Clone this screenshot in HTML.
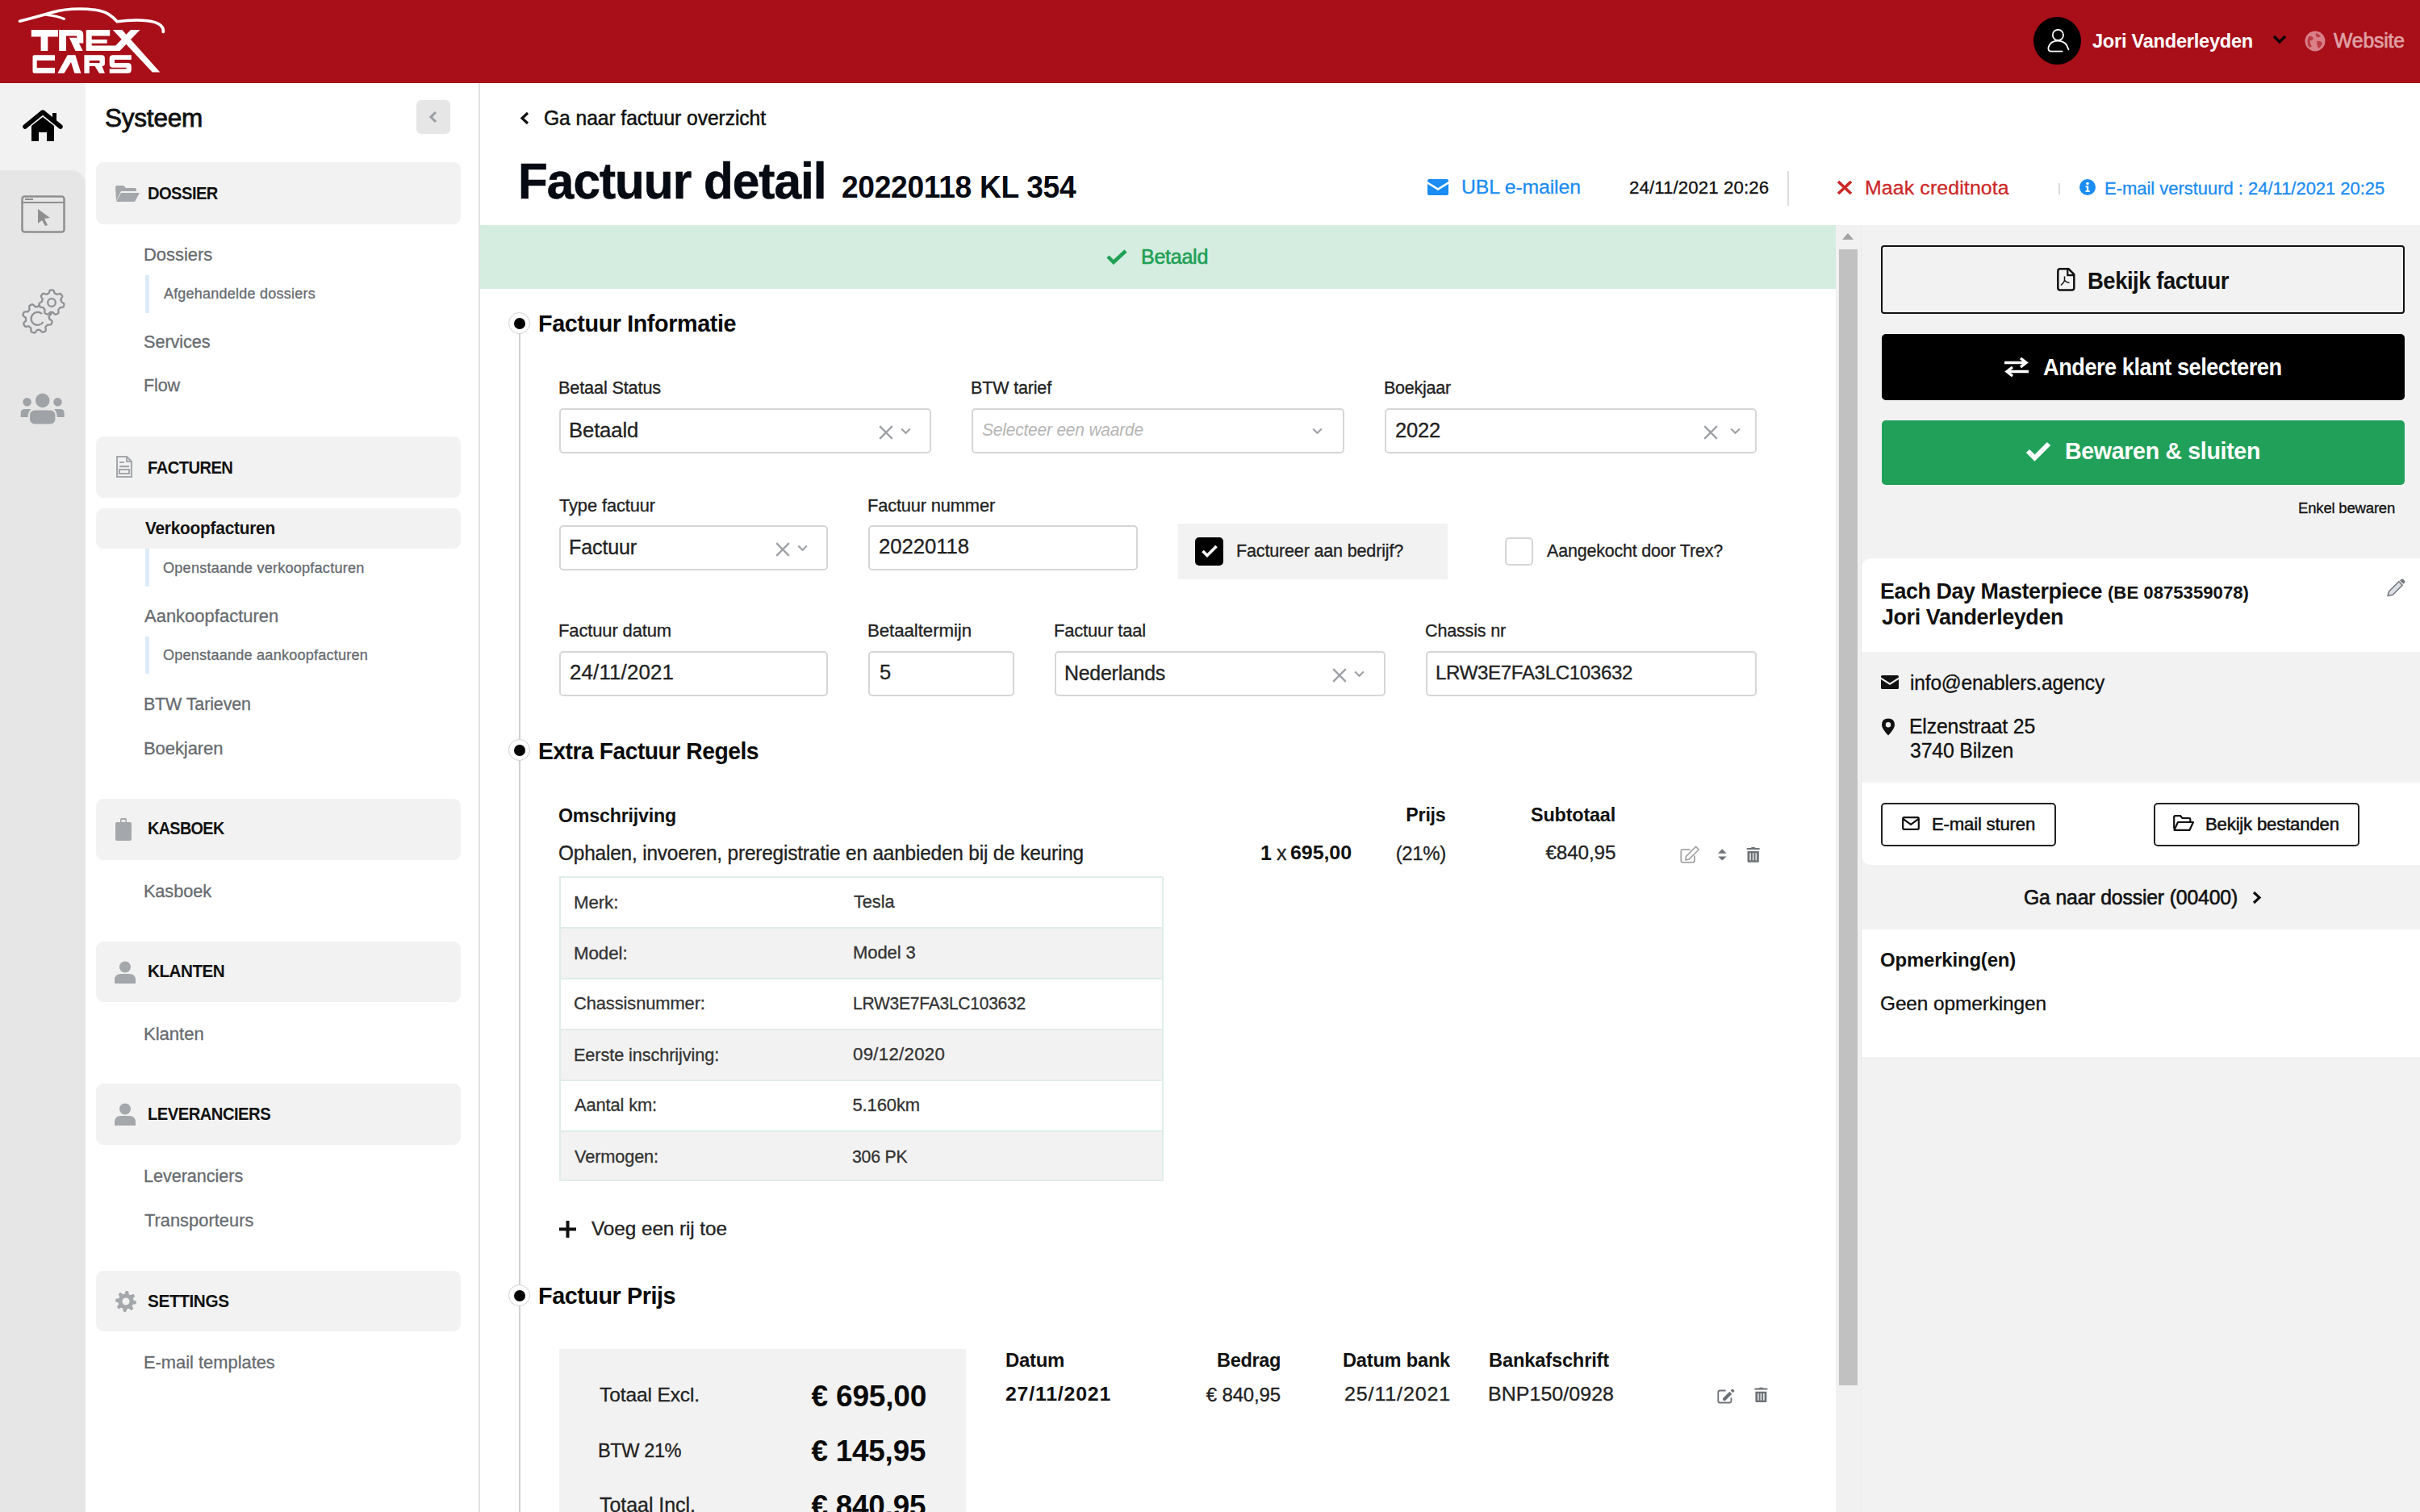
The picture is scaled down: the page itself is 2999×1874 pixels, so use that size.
<!DOCTYPE html>
<html><head><meta charset="utf-8"><title>Factuur detail</title>
<style>
html,body{margin:0;padding:0;}
body{width:2999px;height:1874px;position:relative;overflow:hidden;background:#fff;font-family:"Liberation Sans",sans-serif;}
.t{position:absolute;white-space:nowrap;line-height:1;}
</style></head><body>
<div style="position:absolute;left:0px;top:0px;width:2999px;height:103px;background:#a80f19;"></div>
<svg style="position:absolute;left:0px;top:0px;" width="230" height="103" viewBox="0 0 230 103"><g fill="#fff">
<path d="M38.8,36.9 H72 V45.6 H59.3 V63 H50.6 V45.6 H38.8 Z"/>
<path d="M73.2,36.9 H97 Q103.3,36.9 103.3,43 V53.5 H95.2 V44.6 H81.9 V63 H73.2 Z"/>
<path d="M85.9,46.8 H94.6 L102.7,63 H93.4 Z"/>
<path d="M106.7,36.9 H136.2 V44.5 H113.7 V49.1 H132.7 V53.7 H113.7 V56.6 H146 V63 H106.7 Z"/>
<path d="M139.7,36.9 H151.3 L198.3,89.4 H188.8 Z"/>
<path d="M162,36.9 H173.5 L148.5,63 H137 Z"/>
<path d="M42.5,68.2 H68 V75.1 H45.7 V84 H68 V90.7 H42.5 Q40.5,90.7 40.5,88.7 V70.2 Q40.5,68.2 42.5,68.2 Z"/>
<path d="M71.4,90.7 L83.6,68.2 H93.4 L100.4,90.7 H92.3 L88,77 L79.5,90.7 Z"/>
<path fill-rule="evenodd" d="M104.4,90.7 V68.2 H126 Q129.9,68.2 129.9,72 V79 Q129.9,82 126.5,82 L129.9,90.7 H123 L117.5,82 H110.8 V90.7 Z M110.8,75.1 V78 H123.5 V75.1 Z"/>
<path d="M140,68.2 H162.8 V74 H142 V78 H158.5 Q162.8,78 162.8,82.3 V86.5 Q162.8,90.7 158.5,90.7 H135.7 V85.5 H156.5 V83.8 H140 Q135.7,83.8 135.7,79.5 V72.5 Q135.7,68.2 140,68.2 Z"/>
</g>
<path d="M24.5,26.2 C40,22.5 52,19 64,15.5 C80,11 100,10.2 118,12.2 C131,13.8 138,19 145.2,26.8 C160,24.6 180,24 192,27.6 C200.5,30.5 203,34.5 202.3,39.5" fill="none" stroke="#fff" stroke-width="3.6" stroke-linecap="round"/>
<path d="M58,18.5 Q70,19.5 79.5,23.5" fill="none" stroke="#fff" stroke-width="3" stroke-linecap="round"/></svg>
<div style="position:absolute;left:2520px;top:21px;width:59px;height:59px;border-radius:50%;background:#000"></div>
<svg style="position:absolute;left:2536px;top:36px;" width="30" height="30" viewBox="0 0 30 30"><circle cx="14.4" cy="7.4" r="6.6" fill="none" stroke="#fff" stroke-width="1.8"/><path d="M19.7,27.6 H6 Q2,27.6 2.5,23 Q4.5,14.6 14.6,14.6 Q24.5,14.6 27.4,25.3" fill="none" stroke="#fff" stroke-width="1.8" stroke-linecap="round"/></svg>
<svg style="position:absolute;left:2815px;top:42px;" width="20" height="14" viewBox="0 0 20 14"><path d="M3,3 L10,10 L17,3" fill="none" stroke="#000" stroke-width="3.2"/></svg>
<svg style="position:absolute;left:2856px;top:38px;" width="26" height="26" viewBox="0 0 26 26"><circle cx="13" cy="13" r="12.5" fill="#d98088"/><path d="M5,7 Q9,6 11,9 Q10,13 7,12 Q6,16 9,19 Q7,22 5,20 Q2,15 5,7 Z M14,3 Q18,4 20,7 Q17,9 15,8 Q13,6 14,3 Z M15,13 Q19,12 22,15 Q21,20 17,22 Q15,18 15,13 Z" fill="#a80f19" opacity="0.6"/></svg>
<div style="position:absolute;left:0px;top:103px;width:106px;height:1771px;background:#f2f2f2;"></div>
<div style="position:absolute;left:0px;top:211px;width:106px;height:1663px;background:#e6e6e6;border-top-right-radius:18px;"></div>
<svg style="position:absolute;left:28px;top:136px;" width="50" height="40" viewBox="0 0 50 40"><path d="M3,21 L25,3 L47,21" fill="none" stroke="#000" stroke-width="5.5" stroke-linecap="round" stroke-linejoin="round"/><path d="M37,4 H42 V15 L37,11 Z" fill="#000"/><path d="M11,20 L25,9 L39,20 V39 H30 V28 H20 V39 H11 Z" fill="#000"/></svg>
<svg style="position:absolute;left:26px;top:242px;" width="56" height="48" viewBox="0 0 56 48"><rect x="1.5" y="1.5" width="52" height="44" rx="3" fill="none" stroke="#8f8f8f" stroke-width="2.5"/><line x1="2" y1="9" x2="53" y2="9" stroke="#8f8f8f" stroke-width="2"/><rect x="5" y="4" width="10" height="2" fill="#8f8f8f"/><path d="M21,17 L36,28 L29,29 L33,37 L30,38 L26,31 L21,35 Z" fill="#8f8f8f"/></svg>
<svg style="position:absolute;left:25px;top:358px;" width="56" height="56" viewBox="0 0 56 56"><g stroke="#8f9194" stroke-width="2.3" stroke-linejoin="round"><path d="M39.63,40.18 L39.50,40.77 L39.35,41.35 L39.18,41.93 L39.00,42.51 L38.79,43.08 L38.57,43.64 L38.32,44.20 L37.47,44.45 L36.46,44.57 L35.47,44.63 L34.49,44.64 L33.53,44.60 L33.26,44.99 L32.97,45.37 L32.67,45.74 L32.37,46.10 L32.05,46.45 L31.72,46.79 L31.37,47.12 L31.46,47.94 L31.61,48.91 L31.70,49.89 L31.74,50.90 L31.72,51.92 L31.21,52.25 L30.69,52.56 L30.16,52.85 L29.62,53.12 L29.07,53.38 L28.52,53.62 L27.95,53.84 L27.17,53.41 L26.38,52.79 L25.63,52.13 L24.93,51.45 L24.28,50.73 L23.81,50.81 L23.34,50.88 L22.87,50.94 L22.40,50.97 L21.92,50.99 L21.45,51.00 L20.97,50.99 L20.45,51.63 L19.87,52.42 L19.24,53.18 L18.56,53.92 L17.82,54.63 L17.23,54.50 L16.65,54.35 L16.07,54.18 L15.49,54.00 L14.92,53.79 L14.36,53.57 L13.80,53.32 L13.55,52.47 L13.43,51.46 L13.37,50.47 L13.36,49.49 L13.40,48.53 L13.01,48.26 L12.63,47.97 L12.26,47.67 L11.90,47.37 L11.55,47.05 L11.21,46.72 L10.88,46.37 L10.06,46.46 L9.09,46.61 L8.11,46.70 L7.10,46.74 L6.08,46.72 L5.75,46.21 L5.44,45.69 L5.15,45.16 L4.88,44.62 L4.62,44.07 L4.38,43.52 L4.16,42.95 L4.59,42.17 L5.21,41.38 L5.87,40.63 L6.55,39.93 L7.27,39.28 L7.19,38.81 L7.12,38.34 L7.06,37.87 L7.03,37.40 L7.01,36.92 L7.00,36.45 L7.01,35.97 L6.37,35.45 L5.58,34.87 L4.82,34.24 L4.08,33.56 L3.37,32.82 L3.50,32.23 L3.65,31.65 L3.82,31.07 L4.00,30.49 L4.21,29.92 L4.43,29.36 L4.68,28.80 L5.53,28.55 L6.54,28.43 L7.53,28.37 L8.51,28.36 L9.47,28.40 L9.74,28.01 L10.03,27.63 L10.33,27.26 L10.63,26.90 L10.95,26.55 L11.28,26.21 L11.63,25.88 L11.54,25.06 L11.39,24.09 L11.30,23.11 L11.26,22.10 L11.28,21.08 L11.79,20.75 L12.31,20.44 L12.84,20.15 L13.38,19.88 L13.93,19.62 L14.48,19.38 L15.05,19.16 L15.83,19.59 L16.62,20.21 L17.37,20.87 L18.07,21.55 L18.72,22.27 L19.19,22.19 L19.66,22.12 L20.13,22.06 L20.60,22.03 L21.08,22.01 L21.55,22.00 L22.03,22.01 L22.55,21.37 L23.13,20.58 L23.76,19.82 L24.44,19.08 L25.18,18.37 L25.77,18.50 L26.35,18.65 L26.93,18.82 L27.51,19.00 L28.08,19.21 L28.64,19.43 L29.20,19.68 L29.45,20.53 L29.57,21.54 L29.63,22.53 L29.64,23.51 L29.60,24.47 L29.99,24.74 L30.37,25.03 L30.74,25.33 L31.10,25.63 L31.45,25.95 L31.79,26.28 L32.12,26.63 L32.94,26.54 L33.91,26.39 L34.89,26.30 L35.90,26.26 L36.92,26.28 L37.25,26.79 L37.56,27.31 L37.85,27.84 L38.12,28.38 L38.38,28.93 L38.62,29.48 L38.84,30.05 L38.41,30.83 L37.79,31.62 L37.13,32.37 L36.45,33.07 L35.73,33.72 L35.81,34.19 L35.88,34.66 L35.94,35.13 L35.97,35.60 L35.99,36.08 L36.00,36.55 L35.99,37.03 L36.63,37.55 L37.42,38.13 L38.18,38.76 L38.92,39.44 Z" fill="none"/><path d="M27,31 A8,8 0 1 0 28.5,41" fill="none"/><path d="M54.42,18.55 L54.35,19.12 L54.26,19.70 L54.15,20.26 L54.02,20.83 L53.87,21.39 L53.69,21.94 L53.50,22.49 L52.74,22.80 L51.86,23.00 L50.97,23.14 L50.10,23.23 L49.24,23.26 L49.00,23.64 L48.74,24.01 L48.47,24.37 L48.19,24.72 L47.90,25.05 L47.59,25.38 L47.27,25.70 L47.32,26.44 L47.43,27.31 L47.48,28.20 L47.47,29.10 L47.41,30.02 L46.91,30.33 L46.41,30.61 L45.90,30.88 L45.37,31.13 L44.84,31.36 L44.30,31.57 L43.75,31.75 L43.04,31.36 L42.33,30.79 L41.66,30.19 L41.05,29.56 L40.49,28.91 L40.04,28.95 L39.59,28.99 L39.15,29.00 L38.70,29.00 L38.25,28.98 L37.80,28.94 L37.36,28.89 L36.81,29.39 L36.20,30.01 L35.53,30.61 L34.82,31.17 L34.06,31.69 L33.51,31.50 L32.98,31.28 L32.45,31.05 L31.93,30.79 L31.41,30.52 L30.91,30.22 L30.43,29.91 L30.29,29.11 L30.29,28.20 L30.35,27.31 L30.46,26.44 L30.62,25.59 L30.30,25.27 L30.00,24.94 L29.71,24.60 L29.43,24.24 L29.17,23.88 L28.92,23.51 L28.68,23.13 L27.95,23.02 L27.08,22.92 L26.20,22.77 L25.32,22.56 L24.43,22.30 L24.25,21.75 L24.08,21.19 L23.93,20.63 L23.81,20.07 L23.70,19.50 L23.62,18.92 L23.56,18.35 L24.10,17.74 L24.81,17.17 L25.55,16.66 L26.30,16.20 L27.06,15.80 L27.11,15.36 L27.18,14.91 L27.27,14.47 L27.37,14.04 L27.49,13.60 L27.63,13.18 L27.78,12.75 L27.41,12.11 L26.94,11.37 L26.51,10.59 L26.12,9.77 L25.78,8.91 L26.09,8.43 L26.42,7.95 L26.76,7.48 L27.13,7.03 L27.51,6.60 L27.91,6.17 L28.32,5.77 L29.13,5.81 L30.02,6.02 L30.88,6.27 L31.70,6.57 L32.49,6.92 L32.87,6.68 L33.26,6.46 L33.66,6.25 L34.07,6.06 L34.48,5.88 L34.90,5.72 L35.32,5.58 L35.60,4.89 L35.88,4.06 L36.22,3.24 L36.62,2.42 L37.08,1.62 L37.65,1.56 L38.23,1.52 L38.81,1.50 L39.39,1.50 L39.97,1.53 L40.55,1.58 L41.12,1.65 L41.59,2.31 L41.99,3.13 L42.32,3.96 L42.60,4.79 L42.82,5.63 L43.25,5.78 L43.66,5.94 L44.07,6.13 L44.48,6.32 L44.87,6.54 L45.26,6.76 L45.64,7.00 L46.35,6.79 L47.17,6.49 L48.03,6.25 L48.91,6.05 L49.83,5.91 L50.23,6.32 L50.62,6.75 L51.00,7.19 L51.36,7.64 L51.70,8.11 L52.02,8.59 L52.33,9.09 L52.10,9.87 L51.71,10.69 L51.27,11.47 L50.79,12.21 L50.28,12.90 L50.42,13.32 L50.55,13.75 L50.67,14.19 L50.76,14.63 L50.84,15.07 L50.91,15.51 L50.95,15.96 L51.57,16.38 L52.31,16.84 L53.04,17.35 L53.74,17.92 Z" fill="#e6e6e6"/><circle cx="39" cy="17" r="4.8" fill="none"/></g></svg>
<svg style="position:absolute;left:24px;top:486px;" width="58" height="42" viewBox="0 0 58 42"><g fill="#9fa3a7"><circle cx="28.7" cy="10.4" r="8.8"/><rect x="13" y="22.5" width="31.4" height="17" rx="6"/><circle cx="9.6" cy="12.3" r="5.3"/><circle cx="47.5" cy="12.3" r="5.3"/><path d="M1.7,31 V26 Q1.7,21 6.7,21 H14.5 Q11,24 10.5,31 Z"/><path d="M55.7,31 V26 Q55.7,21 50.7,21 H42.9 Q46.4,24 46.9,31 Z"/></g></svg>
<div style="position:absolute;left:593px;top:103px;width:2px;height:1771px;background:#e1e1e1;"></div>
<div style="position:absolute;left:516px;top:124px;width:42px;height:42px;background:#e6e6e6;border-radius:6px;"></div>
<svg style="position:absolute;left:530px;top:137px;" width="14" height="16" viewBox="0 0 14 16"><path d="M10,2 L4,8 L10,14" fill="none" stroke="#9a9ea4" stroke-width="3"/></svg>
<div style="position:absolute;left:119px;top:201px;width:452px;height:77px;background:#f2f2f2;border-radius:9px;"></div>
<svg style="position:absolute;left:142px;top:229px;" width="32" height="22" viewBox="0 0 32 22"><path d="M1,3 Q1,1 3,1 H11 L14,4 H25 Q27,4 27,6 V8 H8 L2,20 Z" fill="#a4a7ab"/><path d="M8,10 H31 L25,21 H2 Z" fill="#a4a7ab"/></svg>
<div style="position:absolute;left:119px;top:540.5px;width:452px;height:76.5px;background:#f2f2f2;border-radius:9px;"></div>
<svg style="position:absolute;left:144px;top:565px;" width="20" height="27" viewBox="0 0 20 27"><path d="M1,1 H13 L19,7 V26 H1 Z" fill="none" stroke="#a4a7ab" stroke-width="2.2"/><path d="M13,1 V7 H19" fill="none" stroke="#a4a7ab" stroke-width="2"/><rect x="4" y="12" width="12" height="2.2" fill="#a4a7ab"/><rect x="4" y="17" width="12" height="5" fill="none" stroke="#a4a7ab" stroke-width="2"/><rect x="4" y="7" width="6" height="2" fill="#a4a7ab"/></svg>
<div style="position:absolute;left:119px;top:990px;width:452px;height:76px;background:#f2f2f2;border-radius:9px;"></div>
<svg style="position:absolute;left:143px;top:1014px;" width="20" height="28" viewBox="0 0 20 28"><rect x="0" y="5" width="20" height="23" rx="2" fill="#a4a7ab"/><rect x="6" y="0" width="8" height="7" rx="1.5" fill="#a4a7ab"/><rect x="7.5" y="2" width="5" height="3" fill="#e9e9e9"/></svg>
<div style="position:absolute;left:119px;top:1167px;width:452px;height:75px;background:#f2f2f2;border-radius:9px;"></div>
<svg style="position:absolute;left:142px;top:1191px;" width="26" height="28" viewBox="0 0 26 28"><circle cx="13" cy="7.5" r="7" fill="#a4a7ab"/><path d="M0,28 V24 Q0,16 8,16 H18 Q26,16 26,24 V28 Z" fill="#a4a7ab"/></svg>
<div style="position:absolute;left:119px;top:1343px;width:452px;height:76px;background:#f2f2f2;border-radius:9px;"></div>
<svg style="position:absolute;left:142px;top:1367px;" width="26" height="28" viewBox="0 0 26 28"><circle cx="13" cy="7.5" r="7" fill="#a4a7ab"/><path d="M0,28 V24 Q0,16 8,16 H18 Q26,16 26,24 V28 Z" fill="#a4a7ab"/></svg>
<div style="position:absolute;left:119px;top:1575px;width:452px;height:75px;background:#f2f2f2;border-radius:9px;"></div>
<svg style="position:absolute;left:142px;top:1599px;" width="28" height="28" viewBox="0 0 28 28"><path d="M27.00,14.00 L26.99,14.43 L26.97,14.85 L26.94,15.27 L26.89,15.70 L26.83,16.12 L26.75,16.54 L26.66,16.95 L25.99,17.21 L25.18,17.39 L24.38,17.52 L23.57,17.60 L22.78,17.64 L22.65,17.92 L22.52,18.20 L22.38,18.48 L22.23,18.75 L22.07,19.02 L21.90,19.28 L21.72,19.53 L22.00,20.14 L22.36,20.86 L22.68,21.61 L22.96,22.39 L23.19,23.19 L22.89,23.49 L22.57,23.77 L22.25,24.05 L21.91,24.31 L21.57,24.57 L21.22,24.81 L20.86,25.04 L20.21,24.75 L19.51,24.31 L18.85,23.83 L18.22,23.32 L17.64,22.78 L17.35,22.89 L17.05,23.00 L16.76,23.09 L16.46,23.18 L16.16,23.25 L15.85,23.32 L15.55,23.37 L15.32,24.00 L15.06,24.76 L14.75,25.52 L14.40,26.26 L14.00,27.00 L13.57,26.99 L13.15,26.97 L12.73,26.94 L12.30,26.89 L11.88,26.83 L11.46,26.75 L11.05,26.66 L10.79,25.99 L10.61,25.18 L10.48,24.38 L10.40,23.57 L10.36,22.78 L10.08,22.65 L9.80,22.52 L9.52,22.38 L9.25,22.23 L8.98,22.07 L8.72,21.90 L8.47,21.72 L7.86,22.00 L7.14,22.36 L6.39,22.68 L5.61,22.96 L4.81,23.19 L4.51,22.89 L4.23,22.57 L3.95,22.25 L3.69,21.91 L3.43,21.57 L3.19,21.22 L2.96,20.86 L3.25,20.21 L3.69,19.51 L4.17,18.85 L4.68,18.22 L5.22,17.64 L5.11,17.35 L5.00,17.05 L4.91,16.76 L4.82,16.46 L4.75,16.16 L4.68,15.85 L4.63,15.55 L4.00,15.32 L3.24,15.06 L2.48,14.75 L1.74,14.40 L1.00,14.00 L1.01,13.57 L1.03,13.15 L1.06,12.73 L1.11,12.30 L1.17,11.88 L1.25,11.46 L1.34,11.05 L2.01,10.79 L2.82,10.61 L3.62,10.48 L4.43,10.40 L5.22,10.36 L5.35,10.08 L5.48,9.80 L5.62,9.52 L5.77,9.25 L5.93,8.98 L6.10,8.72 L6.28,8.47 L6.00,7.86 L5.64,7.14 L5.32,6.39 L5.04,5.61 L4.81,4.81 L5.11,4.51 L5.43,4.23 L5.75,3.95 L6.09,3.69 L6.43,3.43 L6.78,3.19 L7.14,2.96 L7.79,3.25 L8.49,3.69 L9.15,4.17 L9.78,4.68 L10.36,5.22 L10.65,5.11 L10.95,5.00 L11.24,4.91 L11.54,4.82 L11.84,4.75 L12.15,4.68 L12.45,4.63 L12.68,4.00 L12.94,3.24 L13.25,2.48 L13.60,1.74 L14.00,1.00 L14.43,1.01 L14.85,1.03 L15.27,1.06 L15.70,1.11 L16.12,1.17 L16.54,1.25 L16.95,1.34 L17.21,2.01 L17.39,2.82 L17.52,3.62 L17.60,4.43 L17.64,5.22 L17.92,5.35 L18.20,5.48 L18.48,5.62 L18.75,5.77 L19.02,5.93 L19.28,6.10 L19.53,6.28 L20.14,6.00 L20.86,5.64 L21.61,5.32 L22.39,5.04 L23.19,4.81 L23.49,5.11 L23.77,5.43 L24.05,5.75 L24.31,6.09 L24.57,6.43 L24.81,6.78 L25.04,7.14 L24.75,7.79 L24.31,8.49 L23.83,9.15 L23.32,9.78 L22.78,10.36 L22.89,10.65 L23.00,10.95 L23.09,11.24 L23.18,11.54 L23.25,11.84 L23.32,12.15 L23.37,12.45 L24.00,12.68 L24.76,12.94 L25.52,13.25 L26.26,13.60 Z" fill="#a4a7ab"/><circle cx="14" cy="14" r="4.5" fill="#f2f2f2"/></svg>
<div style="position:absolute;left:119px;top:630px;width:452px;height:50px;background:#f2f2f2;border-radius:9px;"></div>
<div style="position:absolute;left:180.4px;top:341px;width:4.799999999999983px;height:47px;background:#dcebfa;"></div>
<div style="position:absolute;left:180.4px;top:680px;width:4.799999999999983px;height:47px;background:#dcebfa;"></div>
<div style="position:absolute;left:180.4px;top:789px;width:4.799999999999983px;height:46px;background:#dcebfa;"></div>
<svg style="position:absolute;left:643px;top:138px;" width="14" height="17" viewBox="0 0 14 17"><path d="M11,2 L4,8.5 L11,15" fill="none" stroke="#111" stroke-width="3.2"/></svg>
<svg style="position:absolute;left:1769px;top:222px;" width="26" height="20" viewBox="0 0 26 20"><path d="M0,2 Q0,0 2,0 H24 Q26,0 26,2 V3 L13,11 L0,3 Z M0,6 L13,14 L26,6 V18 Q26,20 24,20 H2 Q0,20 0,18 Z" fill="#1a8cf2"/></svg>
<div style="position:absolute;left:2215px;top:212px;width:2px;height:43px;background:#dcdcdc;"></div>
<svg style="position:absolute;left:2276px;top:224px;" width="20" height="17" viewBox="0 0 20 17"><path d="M2,1 L18,16 M18,1 L2,16" stroke="#cc2727" stroke-width="3.6"/></svg>
<div style="position:absolute;left:2551px;top:227px;width:2px;height:14px;background:#dcdcdc;"></div>
<svg style="position:absolute;left:2577px;top:222px;" width="20" height="20" viewBox="0 0 20 20"><circle cx="10" cy="10" r="10" fill="#1a8cf2"/><circle cx="10" cy="5.5" r="1.8" fill="#fff"/><path d="M7.5,8.5 H11.2 V14.2 H12.8 V16 H7.5 V14.2 H9 V10.2 H7.5 Z" fill="#fff"/></svg>
<div style="position:absolute;left:595px;top:279px;width:1680px;height:79px;background:#d4ede0;"></div>
<svg style="position:absolute;left:1370px;top:308px;" width="28" height="20" viewBox="0 0 28 20"><path d="M3,10 L10,17 L25,3" fill="none" stroke="#1fa055" stroke-width="4.5"/></svg>
<div style="position:absolute;left:643px;top:400px;width:2px;height:1474px;background:#d0d0d0;"></div>
<div style="position:absolute;left:629.5px;top:386.6px;width:25px;height:25px;border-radius:50%;background:#fff;border:1.5px solid #cfcfcf"></div>
<div style="position:absolute;left:636.5px;top:393.6px;width:14px;height:14px;border-radius:50%;background:#000"></div>
<div style="position:absolute;left:629.5px;top:916.4px;width:25px;height:25px;border-radius:50%;background:#fff;border:1.5px solid #cfcfcf"></div>
<div style="position:absolute;left:636.5px;top:923.4px;width:14px;height:14px;border-radius:50%;background:#000"></div>
<div style="position:absolute;left:629.5px;top:1591.5px;width:25px;height:25px;border-radius:50%;background:#fff;border:1.5px solid #cfcfcf"></div>
<div style="position:absolute;left:636.5px;top:1598.5px;width:14px;height:14px;border-radius:50%;background:#000"></div>
<div style="position:absolute;left:693px;top:506px;width:457px;height:52px;border:2px solid #d6d6d9;border-radius:5px;background:#fff"></div>
<svg style="position:absolute;left:1089px;top:526.5px;" width="18" height="18" viewBox="0 0 18 18"><path d="M1.2,1.2 L16.8,16.8 M16.8,1.2 L1.2,16.8" stroke="#9ea1a5" stroke-width="2.4"/></svg>
<svg style="position:absolute;left:1115.5px;top:530px;" width="13" height="9" viewBox="0 0 13 9"><path d="M1.2,1.5 L6.5,6.8 L11.8,1.5" fill="none" stroke="#9ea1a5" stroke-width="2.1"/></svg>
<div style="position:absolute;left:1204px;top:506px;width:458px;height:52px;border:2px solid #d6d6d9;border-radius:5px;background:#fff"></div>
<svg style="position:absolute;left:1625.5px;top:530px;" width="13" height="9" viewBox="0 0 13 9"><path d="M1.2,1.5 L6.5,6.8 L11.8,1.5" fill="none" stroke="#9ea1a5" stroke-width="2.1"/></svg>
<div style="position:absolute;left:1716px;top:506px;width:457px;height:52px;border:2px solid #d6d6d9;border-radius:5px;background:#fff"></div>
<svg style="position:absolute;left:2111px;top:526.5px;" width="18" height="18" viewBox="0 0 18 18"><path d="M1.2,1.2 L16.8,16.8 M16.8,1.2 L1.2,16.8" stroke="#9ea1a5" stroke-width="2.4"/></svg>
<svg style="position:absolute;left:2143.5px;top:530px;" width="13" height="9" viewBox="0 0 13 9"><path d="M1.2,1.5 L6.5,6.8 L11.8,1.5" fill="none" stroke="#9ea1a5" stroke-width="2.1"/></svg>
<div style="position:absolute;left:693px;top:651px;width:329px;height:52px;border:2px solid #d6d6d9;border-radius:5px;background:#fff"></div>
<svg style="position:absolute;left:961px;top:671.5px;" width="18" height="18" viewBox="0 0 18 18"><path d="M1.2,1.2 L16.8,16.8 M16.8,1.2 L1.2,16.8" stroke="#9ea1a5" stroke-width="2.4"/></svg>
<svg style="position:absolute;left:987.5px;top:675px;" width="13" height="9" viewBox="0 0 13 9"><path d="M1.2,1.5 L6.5,6.8 L11.8,1.5" fill="none" stroke="#9ea1a5" stroke-width="2.1"/></svg>
<div style="position:absolute;left:1076px;top:651px;width:330px;height:52px;border:2px solid #d6d6d9;border-radius:5px;background:#fff"></div>
<div style="position:absolute;left:1460px;top:649px;width:334px;height:69px;background:#f2f2f2;"></div>
<div style="position:absolute;left:1481px;top:666px;width:35px;height:35px;border-radius:5px;background:#000"></div>
<svg style="position:absolute;left:1488px;top:674px;" width="22" height="18" viewBox="0 0 22 18"><path d="M2.5,9 L8,14.5 L19.5,3" fill="none" stroke="#fff" stroke-width="3.6"/></svg>
<div style="position:absolute;left:1865px;top:666px;width:31px;height:31px;border-radius:5px;background:#fff;border:2px solid #d6d6d9"></div>
<div style="position:absolute;left:693px;top:807px;width:329px;height:52px;border:2px solid #d6d6d9;border-radius:5px;background:#fff"></div>
<div style="position:absolute;left:1076px;top:807px;width:177px;height:52px;border:2px solid #d6d6d9;border-radius:5px;background:#fff"></div>
<div style="position:absolute;left:1307px;top:807px;width:406px;height:52px;border:2px solid #d6d6d9;border-radius:5px;background:#fff"></div>
<svg style="position:absolute;left:1651px;top:827.5px;" width="18" height="18" viewBox="0 0 18 18"><path d="M1.2,1.2 L16.8,16.8 M16.8,1.2 L1.2,16.8" stroke="#9ea1a5" stroke-width="2.4"/></svg>
<svg style="position:absolute;left:1677.5px;top:831px;" width="13" height="9" viewBox="0 0 13 9"><path d="M1.2,1.5 L6.5,6.8 L11.8,1.5" fill="none" stroke="#9ea1a5" stroke-width="2.1"/></svg>
<div style="position:absolute;left:1767px;top:807px;width:406px;height:52px;border:2px solid #d6d6d9;border-radius:5px;background:#fff"></div>
<svg style="position:absolute;left:2082px;top:1047px;" width="26" height="24" viewBox="0 0 26 24"><path d="M12.5,5.9 H3.6 Q1.3,5.9 1.3,8.2 V19.5 Q1.3,21.8 3.6,21.8 H15.6 Q17.9,21.8 17.9,19.5 V13.5" fill="none" stroke="#a3a3a3" stroke-width="1.8"/><path d="M7.4,14.6 L19.6,2.4 L23.2,6 L11,18.2 L7,19 Z" fill="none" stroke="#a3a3a3" stroke-width="1.7" stroke-linejoin="round"/></svg>
<svg style="position:absolute;left:2128px;top:1050px;" width="13" height="18" viewBox="0 0 13 18"><path d="M1,7.8 L6.3,2.2 L11.6,7.8 Z M1,11.6 H11.6 L6.3,16.6 Z" fill="#6e7276"/></svg>
<svg style="position:absolute;left:2164px;top:1049px;" width="18" height="21" viewBox="0 0 18 21"><rect x="0.5" y="2" width="16.3" height="1.9" rx="0.9" fill="#6e7276"/><path d="M6,2.2 Q8.6,0.6 11.2,2.2" fill="none" stroke="#6e7276" stroke-width="1.2"/><path d="M1.5,6 H15.8 V18.2 Q15.8,19.7 14.3,19.7 H3 Q1.5,19.7 1.5,18.2 Z" fill="#6e7276"/><rect x="4.2" y="8.3" width="1.7" height="9" fill="#dfe1e3"/><rect x="7.8" y="8.3" width="1.7" height="9" fill="#dfe1e3"/><rect x="11.4" y="8.3" width="1.7" height="9" fill="#dfe1e3"/></svg>
<div style="position:absolute;left:693px;top:1086px;width:745px;height:374px;border:2px solid #e1ecea;background:#fff"></div>
<div style="position:absolute;left:695px;top:1151px;width:745px;height:61px;background:#f2f2f2;"></div>
<div style="position:absolute;left:695px;top:1149px;width:745px;height:2px;background:#e1ecea;"></div>
<div style="position:absolute;left:695px;top:1212px;width:745px;height:2px;background:#e1ecea;"></div>
<div style="position:absolute;left:695px;top:1277px;width:745px;height:61px;background:#f2f2f2;"></div>
<div style="position:absolute;left:695px;top:1275px;width:745px;height:2px;background:#e1ecea;"></div>
<div style="position:absolute;left:695px;top:1338px;width:745px;height:2px;background:#e1ecea;"></div>
<div style="position:absolute;left:695px;top:1403px;width:745px;height:59px;background:#f2f2f2;"></div>
<div style="position:absolute;left:695px;top:1401px;width:745px;height:2px;background:#e1ecea;"></div>
<svg style="position:absolute;left:692px;top:1512px;" width="23" height="23" viewBox="0 0 23 23"><path d="M11.5,1 V22 M1,11.5 H22" stroke="#111" stroke-width="4"/></svg>
<div style="position:absolute;left:693px;top:1672px;width:504px;height:202px;background:#f2f2f2;"></div>
<svg style="position:absolute;left:2128px;top:1718px;" width="24" height="24" viewBox="0 0 24 24"><path d="M10.5,5.5 H3.2 Q1.3,5.5 1.3,7.4 V18.6 Q1.3,20.5 3.2,20.5 H15.5 Q17.4,20.5 17.4,18.6 V14.2" fill="none" stroke="#6e7276" stroke-width="1.8"/><path d="M7.2,17.2 Q6.2,16 7.3,14.8 L15.4,6.8 L18.4,9.8 L10.3,17.8 Q9,18.8 7.2,17.2 Z" fill="#6e7276"/><path d="M16.6,5.5 L18.2,3.9 Q19,3.2 19.8,3.9 L21,5.1 Q21.7,5.9 21,6.7 L19.5,8.3 Z" fill="#6e7276"/></svg>
<svg style="position:absolute;left:2174px;top:1719px;" width="17" height="20" viewBox="0 0 17 20"><rect x="0.2" y="1.6" width="16.4" height="1.9" rx="0.9" fill="#6e7276"/><path d="M5.8,1.8 Q8.4,0.4 11,1.8" fill="none" stroke="#6e7276" stroke-width="1.1"/><path d="M1.4,5.7 H15.4 V17.4 Q15.4,19 13.8,19 H3 Q1.4,19 1.4,17.4 Z" fill="#6e7276"/><rect x="4" y="8" width="1.7" height="8.6" fill="#dfe1e3"/><rect x="7.5" y="8" width="1.7" height="8.6" fill="#dfe1e3"/><rect x="11" y="8" width="1.7" height="8.6" fill="#dfe1e3"/></svg>
<div style="position:absolute;left:2275px;top:279px;width:31px;height:1595px;background:#f1f1f1;"></div>
<div style="position:absolute;left:2279px;top:309px;width:23px;height:1408px;background:#c1c1c1;"></div>
<svg style="position:absolute;left:2283px;top:289px;" width="14" height="8" viewBox="0 0 14 8"><path d="M7,0 L14,8 H0 Z" fill="#a3a3a3"/></svg>
<div style="position:absolute;left:2306px;top:279px;width:693px;height:1595px;background:#f2f2f2;border-left:1px solid #e4ecea;"></div>
<div style="position:absolute;left:2331px;top:304px;width:645px;height:81px;border:2px solid #111;border-radius:4px"></div>
<svg style="position:absolute;left:2549px;top:332px;" width="23" height="29" viewBox="0 0 23 29"><path d="M4,1.3 H14.5 L21.3,8 V24.8 Q21.3,27.6 18.5,27.6 H4 Q1.3,27.6 1.3,24.8 V4 Q1.3,1.3 4,1.3 Z" fill="none" stroke="#111" stroke-width="2.5"/><path d="M13.3,1.5 V9.2 H21" fill="none" stroke="#111" stroke-width="2.2"/><path d="M9.5,10.5 V15 Q9.5,17 7.5,19 L5,21.5 M9.5,15 Q11,18 15.5,18.5" fill="none" stroke="#111" stroke-width="1.5"/></svg>
<div style="position:absolute;left:2332px;top:414px;width:648px;height:82px;border-radius:5px;background:#000"></div>
<svg style="position:absolute;left:2483px;top:443px;" width="32" height="24" viewBox="0 0 32 24"><path d="M1,6.5 H27 M21,1 L28,6.5 L21,12" fill="none" stroke="#fff" stroke-width="3.4"/><path d="M31,17.5 H5 M11,12 L4,17.5 L11,23" fill="none" stroke="#fff" stroke-width="3.4"/></svg>
<div style="position:absolute;left:2332px;top:521px;width:648px;height:80px;border-radius:5px;background:#21a05a"></div>
<svg style="position:absolute;left:2510px;top:547px;" width="32" height="25" viewBox="0 0 32 25"><path d="M3,12 L11.5,20.5 L29,3" fill="none" stroke="#fff" stroke-width="6"/></svg>
<div style="position:absolute;left:2307px;top:692px;width:692px;height:116px;background:#fff;border-top-left-radius:12px"></div>
<svg style="position:absolute;left:2957px;top:717px;" width="25" height="24" viewBox="0 0 25 24"><path d="M2,21.5 L3.8,15.8 L15.8,3.8 L20.2,8.2 L8.2,20.2 Z" fill="#dde1e6" stroke="#75797e" stroke-width="1.6" stroke-linejoin="round"/><path d="M17,2.6 L19,0.8 Q20,0 21,0.8 L23.2,3 Q24,4 23.2,5 L21.4,6.8 Z" fill="#75797e"/></svg>
<svg style="position:absolute;left:2331px;top:837px;" width="22" height="17" viewBox="0 0 22 17"><path d="M0,1.5 Q0,0 1.5,0 H20.5 Q22,0 22,1.5 V2.5 L11,9.5 L0,2.5 Z M0,5 L11,12 L22,5 V15.5 Q22,17 20.5,17 H1.5 Q0,17 0,15.5 Z" fill="#111"/></svg>
<svg style="position:absolute;left:2331px;top:890px;" width="18" height="22" viewBox="0 0 18 22"><path d="M9,0.5 Q17,0.5 17,8.5 Q17,13 9,21.5 Q1,13 1,8.5 Q1,0.5 9,0.5 Z" fill="#111"/><circle cx="9" cy="8.2" r="3.2" fill="#f2f2f2"/></svg>
<div style="position:absolute;left:2307px;top:970px;width:692px;height:102px;background:#fff;border-bottom-left-radius:12px"></div>
<div style="position:absolute;left:2331px;top:995px;width:213px;height:50px;border:2px solid #222;border-radius:5px"></div>
<svg style="position:absolute;left:2357px;top:1012px;" width="22" height="17" viewBox="0 0 22 17"><rect x="1.2" y="1.2" width="19.6" height="14.6" rx="1.5" fill="none" stroke="#111" stroke-width="2.2"/><path d="M1.5,3 L11,10 L20.5,3" fill="none" stroke="#111" stroke-width="2.2"/></svg>
<div style="position:absolute;left:2669px;top:995px;width:251px;height:50px;border:2px solid #222;border-radius:5px"></div>
<svg style="position:absolute;left:2693px;top:1010px;" width="26" height="20" viewBox="0 0 26 20"><path d="M1.2,17 V2.5 Q1.2,1.2 2.5,1.2 H9 L11.5,4 H20 Q21.3,4 21.3,5.3 V8" fill="none" stroke="#111" stroke-width="2.2"/><path d="M1.5,18.8 L6,9 H25 L20.5,18.8 Z" fill="none" stroke="#111" stroke-width="2.2" stroke-linejoin="round"/></svg>
<svg style="position:absolute;left:2790px;top:1104px;" width="14" height="17" viewBox="0 0 14 17"><path d="M3,2 L10,8.5 L3,15" fill="none" stroke="#111" stroke-width="3.2"/></svg>
<div style="position:absolute;left:2307px;top:1152px;width:692px;height:157.5px;background:#fff;"></div>
<div class="t" id="t0" style="left:2593.00px;top:38.8px;font:700 24.38px/1 'Liberation Sans',sans-serif;color:#fff;letter-spacing:-0.282px;transform:scaleX(0.9699);transform-origin:left center;">Jori Vanderleyden</div>
<div class="t" id="t1" style="left:2892.00px;top:38.2px;font:400 25px/1 'Liberation Sans',sans-serif;color:#e0a0a5;letter-spacing:-0.106px;transform:scaleX(0.9875);transform-origin:left center;-webkit-text-stroke:0.7px #e0a0a5;">Website</div>
<div class="t" id="t2" style="left:130.00px;top:130.8px;font:400 31.57px/1 'Liberation Sans',sans-serif;color:#111;letter-spacing:-0.217px;transform:scaleX(0.9980);transform-origin:left center;-webkit-text-stroke:0.8px #111;">Systeem</div>
<div class="t" id="t3" style="left:182.59px;top:229.8px;font:700 21.39px/1 'Liberation Sans',sans-serif;color:#111;letter-spacing:-0.607px;transform:scaleX(0.9439);transform-origin:left center;">DOSSIER</div>
<div class="t" id="t4" style="left:182.60px;top:569.9px;font:700 21.43px/1 'Liberation Sans',sans-serif;color:#111;letter-spacing:-0.627px;transform:scaleX(0.9435);transform-origin:left center;">FACTUREN</div>
<div class="t" id="t5" style="left:182.60px;top:1016.9px;font:700 21.33px/1 'Liberation Sans',sans-serif;color:#111;letter-spacing:-0.712px;transform:scaleX(0.9304);transform-origin:left center;">KASBOEK</div>
<div class="t" id="t6" style="left:182.60px;top:1193.2px;font:700 21.57px/1 'Liberation Sans',sans-serif;color:#111;letter-spacing:-0.549px;transform:scaleX(0.9603);transform-origin:left center;">KLANTEN</div>
<div class="t" id="t7" style="left:182.60px;top:1370.8px;font:700 21.47px/1 'Liberation Sans',sans-serif;color:#111;letter-spacing:-0.583px;transform:scaleX(0.9436);transform-origin:left center;">LEVERANCIERS</div>
<div class="t" id="t8" style="left:182.60px;top:1601.6px;font:700 21.71px/1 'Liberation Sans',sans-serif;color:#111;letter-spacing:-0.432px;transform:scaleX(0.9584);transform-origin:left center;">SETTINGS</div>
<div class="t" id="t9" style="left:179.70px;top:645.3px;font:700 21.48px/1 'Liberation Sans',sans-serif;color:#111;letter-spacing:-0.243px;transform:scaleX(0.9707);transform-origin:left center;">Verkoopfacturen</div>
<div class="t" id="t10" style="left:177.90px;top:304.9px;font:400 21.8px/1 'Liberation Sans',sans-serif;color:#676b70;letter-spacing:-0.055px;transform:scaleX(1.0092);transform-origin:left center;-webkit-text-stroke:0.3px #676b70;">Dossiers</div>
<div class="t" id="t11" style="left:177.91px;top:413.3px;font:400 21.8px/1 'Liberation Sans',sans-serif;color:#676b70;letter-spacing:-0.105px;transform:scaleX(0.9972);transform-origin:left center;-webkit-text-stroke:0.3px #676b70;">Services</div>
<div class="t" id="t12" style="left:177.91px;top:467.4px;font:400 21.8px/1 'Liberation Sans',sans-serif;color:#676b70;letter-spacing:-0.133px;transform:scaleX(0.9914);transform-origin:left center;-webkit-text-stroke:0.3px #676b70;">Flow</div>
<div class="t" id="t13" style="left:178.90px;top:752.5px;font:400 21.8px/1 'Liberation Sans',sans-serif;color:#676b70;letter-spacing:0.019px;transform:scaleX(1.0073);transform-origin:left center;-webkit-text-stroke:0.3px #676b70;">Aankoopfacturen</div>
<div class="t" id="t14" style="left:177.90px;top:862.8px;font:400 21.51px/1 'Liberation Sans',sans-serif;color:#676b70;letter-spacing:-0.134px;-webkit-text-stroke:0.3px #676b70;">BTW Tarieven</div>
<div class="t" id="t15" style="left:177.90px;top:916.5px;font:400 21.8px/1 'Liberation Sans',sans-serif;color:#676b70;letter-spacing:-0.091px;transform:scaleX(1.0104);transform-origin:left center;-webkit-text-stroke:0.3px #676b70;">Boekjaren</div>
<div class="t" id="t16" style="left:177.90px;top:1093.5px;font:400 21.8px/1 'Liberation Sans',sans-serif;color:#676b70;letter-spacing:-0.104px;-webkit-text-stroke:0.3px #676b70;">Kasboek</div>
<div class="t" id="t17" style="left:177.90px;top:1270.5px;font:400 21.8px/1 'Liberation Sans',sans-serif;color:#676b70;letter-spacing:-0.059px;transform:scaleX(1.0167);transform-origin:left center;-webkit-text-stroke:0.3px #676b70;">Klanten</div>
<div class="t" id="t18" style="left:177.90px;top:1446.5px;font:400 21.8px/1 'Liberation Sans',sans-serif;color:#676b70;letter-spacing:-0.080px;transform:scaleX(0.9949);transform-origin:left center;-webkit-text-stroke:0.3px #676b70;">Leveranciers</div>
<div class="t" id="t19" style="left:178.90px;top:1501.5px;font:400 21.8px/1 'Liberation Sans',sans-serif;color:#676b70;letter-spacing:0.056px;-webkit-text-stroke:0.3px #676b70;">Transporteurs</div>
<div class="t" id="t20" style="left:177.90px;top:1678.1px;font:400 21.8px/1 'Liberation Sans',sans-serif;color:#676b70;letter-spacing:-0.018px;transform:scaleX(1.0048);transform-origin:left center;-webkit-text-stroke:0.3px #676b70;">E-mail templates</div>
<div class="t" id="t21" style="left:202.90px;top:355.0px;font:400 18px/1 'Liberation Sans',sans-serif;color:#676b70;letter-spacing:0.236px;-webkit-text-stroke:0.3px #676b70;">Afgehandelde dossiers</div>
<div class="t" id="t22" style="left:201.90px;top:694.8px;font:400 18px/1 'Liberation Sans',sans-serif;color:#676b70;letter-spacing:0.197px;transform:scaleX(1.0081);transform-origin:left center;-webkit-text-stroke:0.3px #676b70;">Openstaande verkoopfacturen</div>
<div class="t" id="t23" style="left:201.90px;top:803.4px;font:400 18px/1 'Liberation Sans',sans-serif;color:#676b70;letter-spacing:0.189px;transform:scaleX(1.0064);transform-origin:left center;-webkit-text-stroke:0.3px #676b70;">Openstaande aankoopfacturen</div>
<div class="t" id="t24" style="left:674.00px;top:133.8px;font:400 25px/1 'Liberation Sans',sans-serif;color:#111;letter-spacing:-0.091px;transform:scaleX(0.9877);transform-origin:left center;-webkit-text-stroke:0.5px #111;">Ga naar factuur overzicht</div>
<div class="t" id="t25" style="left:642.39px;top:192.5px;font:700 62.54px/1 'Liberation Sans',sans-serif;color:#060a12;letter-spacing:-1.006px;transform:scaleX(0.9636);transform-origin:left center;-webkit-text-stroke:0.6px #060a12;">Factuur detail</div>
<div class="t" id="t26" style="left:1042.60px;top:213.1px;font:700 38.25px/1 'Liberation Sans',sans-serif;color:#060a12;letter-spacing:-0.356px;transform:scaleX(0.9738);transform-origin:left center;">20220118 KL 354</div>
<div class="t" id="t27" style="left:1810.99px;top:220.3px;font:400 24.5px/1 'Liberation Sans',sans-serif;color:#1a8cf2;letter-spacing:-0.097px;transform:scaleX(1.0103);transform-origin:left center;-webkit-text-stroke:0.3px #1a8cf2;">UBL e-mailen</div>
<div class="t" id="t28" style="left:2018.60px;top:222.4px;font:400 22px/1 'Liberation Sans',sans-serif;color:#111;letter-spacing:0.110px;transform:scaleX(1.0106);transform-origin:left center;-webkit-text-stroke:0.3px #111;">24/11/2021 20:26</div>
<div class="t" id="t29" style="left:2311.39px;top:220.8px;font:400 24.5px/1 'Liberation Sans',sans-serif;color:#cc2727;letter-spacing:0.152px;transform:scaleX(1.0126);transform-origin:left center;-webkit-text-stroke:0.3px #cc2727;">Maak creditnota</div>
<div class="t" id="t30" style="left:2608.00px;top:222.9px;font:400 22px/1 'Liberation Sans',sans-serif;color:#1a8cf2;letter-spacing:-0.024px;-webkit-text-stroke:0.3px #1a8cf2;">E-mail verstuurd : 24/11/2021 20:25</div>
<div class="t" id="t31" style="left:1413.97px;top:305.9px;font:400 24.91px/1 'Liberation Sans',sans-serif;color:#1fa055;letter-spacing:-0.256px;transform:scaleX(1.0048);transform-origin:left center;-webkit-text-stroke:0.6px #1fa055;">Betaald</div>
<div class="t" id="t32" style="left:667.00px;top:386.2px;font:700 29.96px/1 'Liberation Sans',sans-serif;color:#0a0a0a;letter-spacing:-0.443px;transform:scaleX(0.9610);transform-origin:left center;">Factuur Informatie</div>
<div class="t" id="t33" style="left:667.00px;top:916.3px;font:700 29.77px/1 'Liberation Sans',sans-serif;color:#0a0a0a;letter-spacing:-0.535px;transform:scaleX(0.9511);transform-origin:left center;">Extra Factuur Regels</div>
<div class="t" id="t34" style="left:666.99px;top:1590.7px;font:700 29.85px/1 'Liberation Sans',sans-serif;color:#0a0a0a;letter-spacing:-0.475px;transform:scaleX(0.9647);transform-origin:left center;">Factuur Prijs</div>
<div class="t" id="t35" style="left:692.00px;top:470.3px;font:400 22.1px/1 'Liberation Sans',sans-serif;color:#222;letter-spacing:-0.167px;transform:scaleX(0.9826);transform-origin:left center;-webkit-text-stroke:0.3px #222;">Betaal Status</div>
<div class="t" id="t36" style="left:1203.00px;top:470.3px;font:400 22.09px/1 'Liberation Sans',sans-serif;color:#222;letter-spacing:-0.171px;transform:scaleX(0.9750);transform-origin:left center;-webkit-text-stroke:0.3px #222;">BTW tarief</div>
<div class="t" id="t37" style="left:1715.00px;top:470.4px;font:400 21.97px/1 'Liberation Sans',sans-serif;color:#222;letter-spacing:-0.236px;transform:scaleX(0.9786);transform-origin:left center;-webkit-text-stroke:0.3px #222;">Boekjaar</div>
<div class="t" id="t38" style="left:693.00px;top:615.7px;font:400 22.23px/1 'Liberation Sans',sans-serif;color:#222;letter-spacing:-0.109px;transform:scaleX(0.9837);transform-origin:left center;-webkit-text-stroke:0.3px #222;">Type factuur</div>
<div class="t" id="t39" style="left:1075.00px;top:615.7px;font:400 22.16px/1 'Liberation Sans',sans-serif;color:#222;letter-spacing:-0.158px;transform:scaleX(0.9856);transform-origin:left center;-webkit-text-stroke:0.3px #222;">Factuur nummer</div>
<div class="t" id="t40" style="left:692.00px;top:771.2px;font:400 22.16px/1 'Liberation Sans',sans-serif;color:#222;letter-spacing:-0.150px;transform:scaleX(0.9937);transform-origin:left center;-webkit-text-stroke:0.3px #222;">Factuur datum</div>
<div class="t" id="t41" style="left:1075.00px;top:771.1px;font:400 22.28px/1 'Liberation Sans',sans-serif;color:#222;letter-spacing:-0.091px;transform:scaleX(1.0020);transform-origin:left center;-webkit-text-stroke:0.3px #222;">Betaaltermijn</div>
<div class="t" id="t42" style="left:1306.00px;top:771.3px;font:400 22.1px/1 'Liberation Sans',sans-serif;color:#222;letter-spacing:-0.156px;transform:scaleX(0.9933);transform-origin:left center;-webkit-text-stroke:0.3px #222;">Factuur taal</div>
<div class="t" id="t43" style="left:1766.00px;top:771.3px;font:400 22.03px/1 'Liberation Sans',sans-serif;color:#222;letter-spacing:-0.200px;transform:scaleX(0.9805);transform-origin:left center;-webkit-text-stroke:0.3px #222;">Chassis nr</div>
<div class="t" id="t44" style="left:705.00px;top:520.7px;font:400 25.19px/1 'Liberation Sans',sans-serif;color:#222;letter-spacing:-0.139px;transform:scaleX(1.0195);transform-origin:left center;-webkit-text-stroke:0.3px #222;">Betaald</div>
<div class="t" id="t45" style="left:1217.00px;top:522.8px;font:italic 400 21.52px/1 'Liberation Sans',sans-serif;color:#b5b5b5;letter-spacing:-0.207px;transform:scaleX(0.9747);transform-origin:left center;">Selecteer een waarde</div>
<div class="t" id="t46" style="left:1729.00px;top:520.7px;font:400 25.12px/1 'Liberation Sans',sans-serif;color:#222;letter-spacing:-0.186px;transform:scaleX(1.0174);transform-origin:left center;-webkit-text-stroke:0.3px #222;">2022</div>
<div class="t" id="t47" style="left:705.00px;top:665.7px;font:400 25.1px/1 'Liberation Sans',sans-serif;color:#222;letter-spacing:-0.176px;transform:scaleX(1.0024);transform-origin:left center;-webkit-text-stroke:0.3px #222;">Factuur</div>
<div class="t" id="t48" style="left:1089.00px;top:665.4px;font:400 25.5px/1 'Liberation Sans',sans-serif;color:#222;letter-spacing:-0.078px;transform:scaleX(1.0099);transform-origin:left center;-webkit-text-stroke:0.3px #222;">20220118</div>
<div class="t" id="t49" style="left:1532.00px;top:672.3px;font:400 22.06px/1 'Liberation Sans',sans-serif;color:#222;letter-spacing:-0.176px;transform:scaleX(0.9773);transform-origin:left center;-webkit-text-stroke:0.3px #222;">Factureer aan bedrijf?</div>
<div class="t" id="t50" style="left:1917.00px;top:672.3px;font:400 22.07px/1 'Liberation Sans',sans-serif;color:#222;letter-spacing:-0.193px;transform:scaleX(0.9729);transform-origin:left center;-webkit-text-stroke:0.3px #222;">Aangekocht door Trex?</div>
<div class="t" id="t51" style="left:706.00px;top:821.4px;font:400 25.5px/1 'Liberation Sans',sans-serif;color:#222;letter-spacing:0.127px;transform:scaleX(1.0160);transform-origin:left center;-webkit-text-stroke:0.3px #222;">24/11/2021</div>
<div class="t" id="t52" style="left:1090.00px;top:821.4px;font:400 25.5px/1 'Liberation Sans',sans-serif;color:#222;-webkit-text-stroke:0.3px #222;">5</div>
<div class="t" id="t53" style="left:1319.00px;top:821.8px;font:400 25.06px/1 'Liberation Sans',sans-serif;color:#222;letter-spacing:-0.204px;transform:scaleX(0.9918);transform-origin:left center;-webkit-text-stroke:0.3px #222;">Nederlands</div>
<div class="t" id="t54" style="left:1778.60px;top:822.0px;font:400 24.83px/1 'Liberation Sans',sans-serif;color:#222;letter-spacing:-0.368px;transform:scaleX(0.9707);transform-origin:left center;-webkit-text-stroke:0.3px #222;">LRW3E7FA3LC103632</div>
<div class="t" id="t55" style="left:692.00px;top:999.8px;font:700 23.55px/1 'Liberation Sans',sans-serif;color:#111;letter-spacing:-0.216px;transform:scaleX(0.9874);transform-origin:left center;">Omschrijving</div>
<div class="t" id="t56" style="right:1208.00px;top:998.9px;font:700 23.38px/1 'Liberation Sans',sans-serif;color:#111;letter-spacing:-0.239px;transform:scaleX(0.9932);transform-origin:right center;">Prijs</div>
<div class="t" id="t57" style="left:1897.00px;top:998.7px;font:700 23.57px/1 'Liberation Sans',sans-serif;color:#111;letter-spacing:-0.193px;transform:scaleX(0.9946);transform-origin:left center;">Subtotaal</div>
<div class="t" id="t58" style="left:692.00px;top:1045.3px;font:400 25.02px/1 'Liberation Sans',sans-serif;color:#222;letter-spacing:-0.195px;transform:scaleX(0.9763);transform-origin:left center;-webkit-text-stroke:0.3px #222;">Ophalen, invoeren, preregistratie en aanbieden bij de keuring</div>
<div class="t" id="t59" style="left:1562.00px;top:1044.8px;font:700 25px/1 'Liberation Sans',sans-serif;color:#111;">1</div>
<div class="t" id="t60" style="left:1582.00px;top:1044.8px;font:400 25px/1 'Liberation Sans',sans-serif;color:#222;-webkit-text-stroke:0.3px #222;">x</div>
<div class="t" id="t61" style="left:1599.00px;top:1045.0px;font:700 24.76px/1 'Liberation Sans',sans-serif;color:#111;letter-spacing:-0.114px;transform:scaleX(1.0138);transform-origin:left center;">695,00</div>
<div class="t" id="t62" style="right:1207.00px;top:1045.5px;font:400 24.22px/1 'Liberation Sans',sans-serif;color:#222;letter-spacing:-0.369px;transform:scaleX(0.9889);transform-origin:right center;-webkit-text-stroke:0.3px #222;">(21%)</div>
<div class="t" id="t63" style="right:997.00px;top:1045.1px;font:400 24.72px/1 'Liberation Sans',sans-serif;color:#222;letter-spacing:-0.135px;transform:scaleX(0.9840);transform-origin:right center;-webkit-text-stroke:0.3px #222;">€840,95</div>
<div class="t" id="t64" style="left:711.01px;top:1107.6px;font:400 21.72px/1 'Liberation Sans',sans-serif;color:#333;letter-spacing:-0.128px;transform:scaleX(1.0293);transform-origin:left center;-webkit-text-stroke:0.3px #333;">Merk:</div>
<div class="t" id="t65" style="left:1057.50px;top:1107.4px;font:400 22px/1 'Liberation Sans',sans-serif;color:#333;letter-spacing:-0.069px;transform:scaleX(0.9900);transform-origin:left center;-webkit-text-stroke:0.3px #333;">Tesla</div>
<div class="t" id="t66" style="left:711.00px;top:1170.6px;font:400 21.77px/1 'Liberation Sans',sans-serif;color:#333;letter-spacing:-0.103px;transform:scaleX(1.0277);transform-origin:left center;-webkit-text-stroke:0.3px #333;">Model:</div>
<div class="t" id="t67" style="left:1056.50px;top:1170.4px;font:400 22px/1 'Liberation Sans',sans-serif;color:#333;letter-spacing:-0.119px;transform:scaleX(1.0022);transform-origin:left center;-webkit-text-stroke:0.3px #333;">Model 3</div>
<div class="t" id="t68" style="left:711.00px;top:1233.4px;font:400 22px/1 'Liberation Sans',sans-serif;color:#333;letter-spacing:-0.127px;transform:scaleX(0.9974);transform-origin:left center;-webkit-text-stroke:0.3px #333;">Chassisnummer:</div>
<div class="t" id="t69" style="left:1056.50px;top:1233.8px;font:400 21.53px/1 'Liberation Sans',sans-serif;color:#333;letter-spacing:-0.258px;transform:scaleX(0.9773);transform-origin:left center;-webkit-text-stroke:0.3px #333;">LRW3E7FA3LC103632</div>
<div class="t" id="t70" style="left:711.00px;top:1296.6px;font:400 21.75px/1 'Liberation Sans',sans-serif;color:#333;letter-spacing:-0.097px;transform:scaleX(0.9974);transform-origin:left center;-webkit-text-stroke:0.3px #333;">Eerste inschrijving:</div>
<div class="t" id="t71" style="left:1056.50px;top:1296.4px;font:400 22px/1 'Liberation Sans',sans-serif;color:#333;letter-spacing:0.259px;transform:scaleX(1.0126);transform-origin:left center;-webkit-text-stroke:0.3px #333;">09/12/2020</div>
<div class="t" id="t72" style="left:712.00px;top:1359.4px;font:400 22px/1 'Liberation Sans',sans-serif;color:#333;letter-spacing:-0.118px;transform:scaleX(0.9929);transform-origin:left center;-webkit-text-stroke:0.3px #333;">Aantal km:</div>
<div class="t" id="t73" style="left:1056.51px;top:1359.4px;font:400 22px/1 'Liberation Sans',sans-serif;color:#333;letter-spacing:-0.125px;-webkit-text-stroke:0.3px #333;">5.160km</div>
<div class="t" id="t74" style="left:712.00px;top:1422.6px;font:400 21.74px/1 'Liberation Sans',sans-serif;color:#333;letter-spacing:-0.126px;-webkit-text-stroke:0.3px #333;">Vermogen:</div>
<div class="t" id="t75" style="left:1056.49px;top:1422.7px;font:400 21.56px/1 'Liberation Sans',sans-serif;color:#333;letter-spacing:-0.213px;transform:scaleX(0.9870);transform-origin:left center;-webkit-text-stroke:0.3px #333;">306 PK</div>
<div class="t" id="t76" style="left:733.00px;top:1511.3px;font:400 24.5px/1 'Liberation Sans',sans-serif;color:#222;letter-spacing:-0.082px;transform:scaleX(0.9943);transform-origin:left center;-webkit-text-stroke:0.3px #222;">Voeg een rij toe</div>
<div class="t" id="t77" style="left:742.70px;top:1717.1px;font:400 24.65px/1 'Liberation Sans',sans-serif;color:#222;letter-spacing:-0.133px;transform:scaleX(0.9971);transform-origin:left center;-webkit-text-stroke:0.3px #222;">Totaal Excl.</div>
<div class="t" id="t78" style="left:740.69px;top:1785.8px;font:400 24.18px/1 'Liberation Sans',sans-serif;color:#222;letter-spacing:-0.464px;transform:scaleX(0.9771);transform-origin:left center;-webkit-text-stroke:0.3px #222;">BTW 21%</div>
<div class="t" id="t79" style="left:742.70px;top:1852.8px;font:400 25px/1 'Liberation Sans',sans-serif;color:#222;letter-spacing:-0.074px;transform:scaleX(1.0024);transform-origin:left center;-webkit-text-stroke:0.3px #222;">Totaal Incl.</div>
<div class="t" id="t80" style="right:1851.20px;top:1711.7px;font:700 37.51px/1 'Liberation Sans',sans-serif;color:#0a0a0a;letter-spacing:-0.219px;transform:scaleX(0.9902);transform-origin:right center;">€ 695,00</div>
<div class="t" id="t81" style="right:1852.20px;top:1779.6px;font:700 37.51px/1 'Liberation Sans',sans-serif;color:#0a0a0a;letter-spacing:-0.219px;transform:scaleX(0.9832);transform-origin:right center;">€ 145,95</div>
<div class="t" id="t82" style="right:1852.20px;top:1848.2px;font:700 37.51px/1 'Liberation Sans',sans-serif;color:#0a0a0a;letter-spacing:-0.219px;transform:scaleX(0.9832);transform-origin:right center;">€ 840,95</div>
<div class="t" id="t83" style="left:1246.00px;top:1674.3px;font:700 23.98px/1 'Liberation Sans',sans-serif;color:#111;letter-spacing:-0.286px;">Datum</div>
<div class="t" id="t84" style="right:1412.00px;top:1674.4px;font:700 23.83px/1 'Liberation Sans',sans-serif;color:#111;letter-spacing:-0.341px;transform:scaleX(0.9874);transform-origin:right center;">Bedrag</div>
<div class="t" id="t85" style="left:1664.00px;top:1674.2px;font:700 24.06px/1 'Liberation Sans',sans-serif;color:#111;letter-spacing:-0.225px;transform:scaleX(0.9825);transform-origin:left center;">Datum bank</div>
<div class="t" id="t86" style="left:1845.00px;top:1674.2px;font:700 24.09px/1 'Liberation Sans',sans-serif;color:#111;letter-spacing:-0.181px;transform:scaleX(0.9834);transform-origin:left center;">Bankafschrift</div>
<div class="t" id="t87" style="left:1246.00px;top:1716.3px;font:700 24.5px/1 'Liberation Sans',sans-serif;color:#111;letter-spacing:0.772px;transform:scaleX(1.0157);transform-origin:left center;">27/11/2021</div>
<div class="t" id="t88" style="right:1412.00px;top:1716.5px;font:400 24.16px/1 'Liberation Sans',sans-serif;color:#222;letter-spacing:-0.152px;transform:scaleX(0.9913);transform-origin:right center;-webkit-text-stroke:0.3px #222;">€ 840,95</div>
<div class="t" id="t89" style="left:1666.00px;top:1716.3px;font:400 24.5px/1 'Liberation Sans',sans-serif;color:#222;letter-spacing:0.819px;transform:scaleX(1.0238);transform-origin:left center;-webkit-text-stroke:0.3px #222;">25/11/2021</div>
<div class="t" id="t90" style="left:1844.00px;top:1716.3px;font:400 24.5px/1 'Liberation Sans',sans-serif;color:#222;letter-spacing:0.038px;transform:scaleX(1.0200);transform-origin:left center;-webkit-text-stroke:0.3px #222;">BNP150/0928</div>
<div class="t" id="t91" style="left:2587.00px;top:333.6px;font:700 28.79px/1 'Liberation Sans',sans-serif;color:#111;letter-spacing:-0.496px;transform:scaleX(0.9543);transform-origin:left center;">Bekijk factuur</div>
<div class="t" id="t92" style="left:2532.00px;top:441.3px;font:700 28.74px/1 'Liberation Sans',sans-serif;color:#fff;letter-spacing:-0.534px;transform:scaleX(0.9474);transform-origin:left center;">Andere klant selecteren</div>
<div class="t" id="t93" style="left:2559.00px;top:545.2px;font:700 29.25px/1 'Liberation Sans',sans-serif;color:#fff;letter-spacing:-0.343px;transform:scaleX(0.9770);transform-origin:left center;">Bewaren &amp; sluiten</div>
<div class="t" id="t94" style="right:31.00px;top:620.4px;font:400 19.03px/1 'Liberation Sans',sans-serif;color:#111;letter-spacing:-0.209px;transform:scaleX(0.9752);transform-origin:right center;-webkit-text-stroke:0.3px #111;">Enkel bewaren</div>
<div class="t" id="t95" style="left:2330.00px;top:719.3px;font:700 28.01px/1 'Liberation Sans',sans-serif;color:#111;letter-spacing:-0.460px;transform:scaleX(0.9603);transform-origin:left center;">Each Day Masterpiece</div>
<div class="t" id="t96" style="left:2611.70px;top:724.4px;font:700 22px/1 'Liberation Sans',sans-serif;color:#111;letter-spacing:-0.010px;transform:scaleX(1.0080);transform-origin:left center;">(BE 0875359078)</div>
<div class="t" id="t97" style="left:2332.00px;top:751.2px;font:700 28.07px/1 'Liberation Sans',sans-serif;color:#111;letter-spacing:-0.418px;transform:scaleX(0.9589);transform-origin:left center;">Jori Vanderleyden</div>
<div class="t" id="t98" style="left:2367.00px;top:833.7px;font:400 25.1px/1 'Liberation Sans',sans-serif;color:#111;letter-spacing:-0.182px;transform:scaleX(0.9779);transform-origin:left center;-webkit-text-stroke:0.3px #111;">info@enablers.agency</div>
<div class="t" id="t99" style="left:2366.00px;top:887.8px;font:400 25.07px/1 'Liberation Sans',sans-serif;color:#111;letter-spacing:-0.178px;transform:scaleX(0.9892);transform-origin:left center;-webkit-text-stroke:0.3px #111;">Elzenstraat 25</div>
<div class="t" id="t100" style="left:2367.00px;top:917.8px;font:400 25.07px/1 'Liberation Sans',sans-serif;color:#111;letter-spacing:-0.181px;transform:scaleX(0.9926);transform-origin:left center;-webkit-text-stroke:0.3px #111;">3740 Bilzen</div>
<div class="t" id="t101" style="left:2394.00px;top:1010.9px;font:400 22.5px/1 'Liberation Sans',sans-serif;color:#111;letter-spacing:-0.201px;transform:scaleX(0.9854);transform-origin:left center;-webkit-text-stroke:0.5px #111;">E-mail sturen</div>
<div class="t" id="t102" style="left:2733.40px;top:1010.9px;font:400 22.53px/1 'Liberation Sans',sans-serif;color:#111;letter-spacing:-0.197px;transform:scaleX(0.9851);transform-origin:left center;-webkit-text-stroke:0.5px #111;">Bekijk bestanden</div>
<div class="t" id="t103" style="left:2508.00px;top:1099.7px;font:400 25.12px/1 'Liberation Sans',sans-serif;color:#111;letter-spacing:-0.160px;transform:scaleX(0.9870);transform-origin:left center;-webkit-text-stroke:0.6px #111;">Ga naar dossier (00400)</div>
<div class="t" id="t104" style="left:2330.00px;top:1177.6px;font:700 24.15px/1 'Liberation Sans',sans-serif;color:#111;letter-spacing:-0.175px;transform:scaleX(0.9918);transform-origin:left center;">Opmerking(en)</div>
<div class="t" id="t105" style="left:2330.00px;top:1232.3px;font:400 24.5px/1 'Liberation Sans',sans-serif;color:#111;letter-spacing:-0.110px;transform:scaleX(0.9970);transform-origin:left center;-webkit-text-stroke:0.3px #111;">Geen opmerkingen</div>
</body></html>
